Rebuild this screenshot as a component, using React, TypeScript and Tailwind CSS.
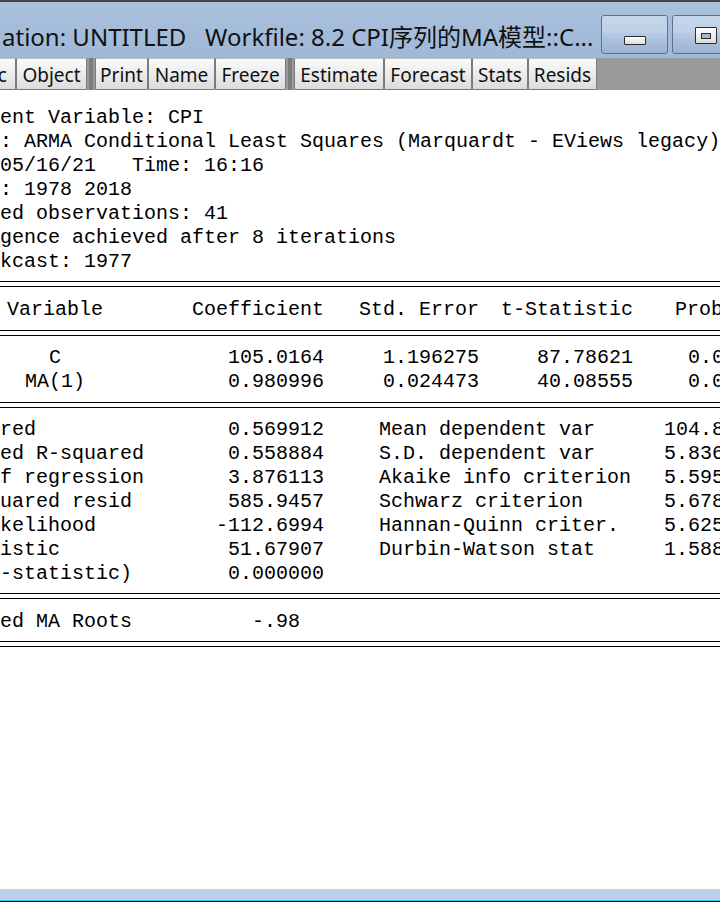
import React from 'react';

const mono = { fontFamily: '"Liberation Mono", "DejaVu Sans Mono", monospace' };
const ui = { fontFamily: '"Noto Sans", "Noto Sans CJK SC", sans-serif' };

const headerLines = [
  'Dependent Variable: CPI',
  'Method: ARMA Conditional Least Squares (Marquardt - EViews legacy)',
  'Date: 05/16/21   Time: 16:16',
  'Sample: 1978 2018',
  'Included observations: 41',
  'Convergence achieved after 8 iterations',
  'MA Backcast: 1977',
];

const coefRows = [
  ['C', '105.0164', '1.196275', '87.78621', '0.0000'],
  ['MA(1)', '0.980996', '0.024473', '40.08555', '0.0000'],
];

const statRows = [
  ['R-squared', '0.569912', 'Mean dependent var', '104.8122'],
  ['Adjusted R-squared', '0.558884', 'S.D. dependent var', '5.836102'],
  ['S.E. of regression', '3.876113', 'Akaike info criterion', '5.595092'],
  ['Sum squared resid', '585.9457', 'Schwarz criterion', '5.678681'],
  ['Log likelihood', '-112.6994', 'Hannan-Quinn criter.', '5.625531'],
  ['F-statistic', '51.67907', 'Durbin-Watson stat', '1.588346'],
  ['Prob(F-statistic)', '0.000000', '', ''],
];

type Tool = { label: string; w: string; sep?: boolean };

const tools: Tool[] = [
  { label: 'Spec', w: 'w-[60px] -ml-[44px]' },
  { label: 'Object', w: 'w-[71px]' },
  { label: 'Print', w: 'w-[53px]', sep: true },
  { label: 'Name', w: 'w-[67px]' },
  { label: 'Freeze', w: 'w-[71px]' },
  { label: 'Estimate', w: 'w-[90px]', sep: true },
  { label: 'Forecast', w: 'w-[88px]' },
  { label: 'Stats', w: 'w-[56px]' },
  { label: 'Resids', w: 'w-[69px]' },
];

const tableCols = 'grid grid-cols-[254px_142px_155px_154px_127px]';

function DoubleRule({ className = '' }: { className?: string }) {
  return <div className={`h-[6px] border-y border-black ${className}`} />;
}

function TitleButton({ kind }: { kind: 'min' | 'max' }) {
  return (
    <div className="relative w-[67px] h-[39px] shrink-0 rounded-[3px] border border-[#5d7190] overflow-hidden bg-gradient-to-b from-[#c9d9ec] via-[#b3c8e1] to-[#9bb3d0]">
      <div className="h-[17px] bg-[#c4d5ea]/60" />
      <div className="absolute inset-0 flex items-center justify-center">
        {kind === 'min' ? (
          <div className="w-[22px] h-[9px] mt-[12px] border border-[#2b2b2b] rounded-[1px] bg-gradient-to-b from-white to-[#dcdcdc]" />
        ) : (
          <div className="w-[22px] h-[17px] mt-[2px] border border-[#2b2b2b] rounded-[1px] bg-gradient-to-b from-white to-[#dcdcdc] flex items-center justify-center">
            <div className="w-[10px] h-[6px] border border-[#2b2b2b] bg-[#9fb6d2]" />
          </div>
        )}
      </div>
    </div>
  );
}

export default function App() {
  return (
    <div className="w-[720px] h-[902px] overflow-hidden flex flex-col bg-white text-black">
      {/* title bar */}
      <div className="h-[2px] bg-[#444] shrink-0" />
      <div className="h-[56px] shrink-0 flex bg-gradient-to-b from-[#a9c1dd] to-[#9fb8d6]">
        <div
          className="w-[601px] shrink-0 whitespace-pre pl-[2px] pt-[19px] text-[24px] leading-[32px] text-[#111] overflow-hidden"
          style={ui}
        >
          ation: UNTITLED   Workfile: 8.2 CPI序列的MA模型::C...
        </div>
        <div className="flex gap-[4px] pt-[13px] shrink-0">
          <TitleButton kind="min" />
          <TitleButton kind="max" />
        </div>
      </div>

      {/* toolbar */}
      <div className="h-[32px] shrink-0 flex bg-[#9a9a9a]" style={ui}>
        {tools.map((t) => (
          <React.Fragment key={t.label}>
            {t.sep && (
              <div className="w-[8px] shrink-0 flex justify-center">
                <div className="w-[4px] bg-[#7d7d7d]" />
              </div>
            )}
            <div
              className={`${t.w} shrink-0 h-[32px] flex items-center justify-center pt-[2px] border border-[#7b7b7b] border-t-[#bdbdbd] rounded-[2px] bg-gradient-to-b from-[#fbfbfb] to-[#dcdcdc] text-[19px] text-[#111]`}
            >
              {t.label}
            </div>
          </React.Fragment>
        ))}
      </div>

      {/* output */}
      <div className="flex-1 overflow-hidden">
        <div className="-ml-[72px] w-[1000px] pt-[14px] text-[20px] leading-[24px]" style={mono}>
          {headerLines.map((l) => (
            <div key={l} className="h-[24px] pt-[2px] whitespace-pre">
              {l}
            </div>
          ))}

          <DoubleRule className="mt-[9px]" />
          <div className={`mt-[9px] h-[24px] pt-[2px] whitespace-pre ${tableCols}`}>
            <div className="text-center">Variable</div>
            <div className="text-right">Coefficient</div>
            <div className="text-right">Std. Error</div>
            <div className="text-right">t-Statistic</div>
            <div className="text-right pr-[25px]">Prob.</div>
          </div>

          <DoubleRule className="mt-[10px]" />
          <div className="mt-[8px]">
            {coefRows.map((r) => (
              <div key={r[0]} className={`h-[24px] pt-[2px] whitespace-pre ${tableCols}`}>
                <div className="text-center">{r[0]}</div>
                <div className="text-right">{r[1]}</div>
                <div className="text-right">{r[2]}</div>
                <div className="text-right">{r[3]}</div>
                <div className="text-right">{r[4]}</div>
              </div>
            ))}
          </div>

          <DoubleRule className="mt-[10px]" />
          <div className="mt-[8px]">
            {statRows.map((r) => (
              <div key={r[0]} className="h-[24px] pt-[2px] flex whitespace-pre">
                <div className="w-[396px] flex justify-between">
                  <span>{r[0]}</span>
                  <span>{r[1]}</span>
                </div>
                <div className="ml-[55px] w-[381px] flex justify-between">
                  <span>{r[2]}</span>
                  <span>{r[3]}</span>
                </div>
              </div>
            ))}
          </div>

          <DoubleRule className="mt-[9px]" />
          <div className="mt-[9px] h-[24px] pt-[2px] flex whitespace-pre">
            <span className="w-[324px]">Inverted MA Roots</span>
            <span>-.98</span>
          </div>
          <DoubleRule className="mt-[9px]" />
        </div>
      </div>

      {/* bottom edge */}
      <div className="h-[11px] shrink-0 bg-[#bcd2eb]" />
      <div className="h-[1px] shrink-0 bg-[#3cc6ec]" />
      <div className="h-[1px] shrink-0 bg-black" />
    </div>
  );
}
